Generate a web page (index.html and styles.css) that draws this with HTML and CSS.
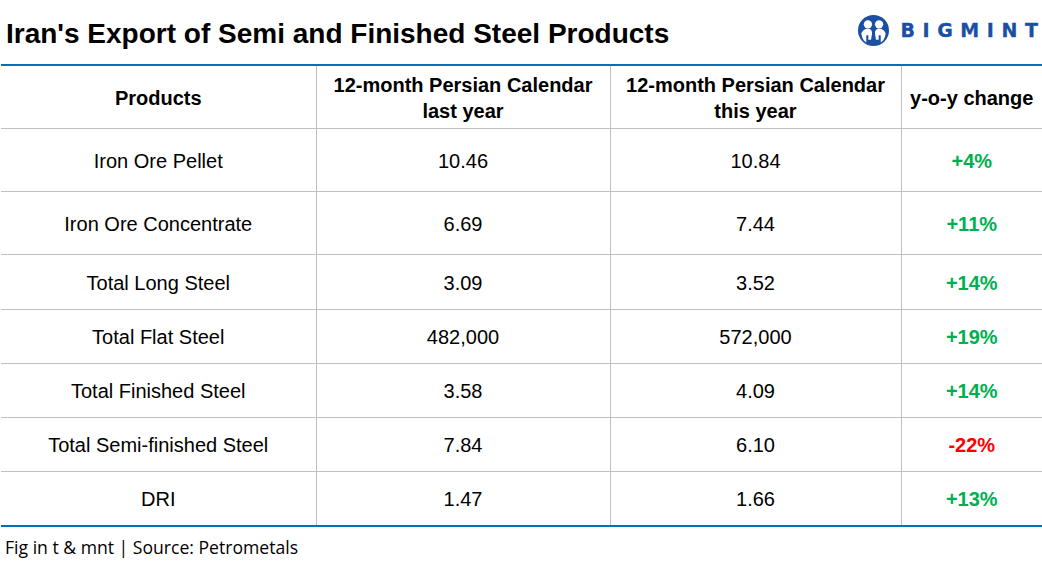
FILE: index.html
```html
<!DOCTYPE html>
<html>
<head>
<meta charset="utf-8">
<link rel="stylesheet" href="styles.css">
</head>
<body>
<div class="page">
  <header class="top">
    <h1 class="title">Iran's Export of Semi and Finished Steel Products</h1>
    <div class="logo">
      <svg class="logo-icon" width="31" height="31" viewBox="0 0 30 30" aria-hidden="true">
        <circle cx="15" cy="15" r="15" fill="#1a4fa3"/>
        <circle cx="9.6" cy="9" r="4" fill="#fff"/>
        <circle cx="20.4" cy="9" r="4" fill="#fff"/>
        <path d="M3.2 18 Q5 13.2 9.6 13.4 Q13.8 13.6 13.6 18 L12.6 24 L10 24 L10 19.5 L8 19.5 L8 26.5 L5.5 24.5 Q3.5 21.5 3.2 18 Z" fill="#fff"/>
        <path d="M26.8 18 Q25 13.2 20.4 13.4 Q16.2 13.6 16.4 18 L17.4 24 L20 24 L20 19.5 L22 19.5 L22 26.5 L24.5 24.5 Q26.5 21.5 26.8 18 Z" fill="#fff"/>
      </svg>
      <span class="logo-text">BIGMIN<span class="logo-last">T</span></span>
    </div>
  </header>
  <table class="data">
    <colgroup>
      <col class="c1"><col class="c2"><col class="c3"><col class="c4">
    </colgroup>
    <thead>
      <tr>
        <th>Products</th>
        <th>12-month Persian Calendar<br>last year</th>
        <th>12-month Persian Calendar<br>this year</th>
        <th>y-o-y change</th>
      </tr>
    </thead>
    <tbody>
      <tr class="tall"><td>Iron Ore Pellet</td><td>10.46</td><td>10.84</td><td class="up">+4%</td></tr>
      <tr class="tall"><td>Iron Ore Concentrate</td><td>6.69</td><td>7.44</td><td class="up">+11%</td></tr>
      <tr class="mid"><td>Total Long Steel</td><td>3.09</td><td>3.52</td><td class="up">+14%</td></tr>
      <tr><td>Total Flat Steel</td><td>482,000</td><td>572,000</td><td class="up">+19%</td></tr>
      <tr><td>Total Finished Steel</td><td>3.58</td><td>4.09</td><td class="up">+14%</td></tr>
      <tr><td>Total Semi-finished Steel</td><td>7.84</td><td>6.10</td><td class="down">-22%</td></tr>
      <tr class="last"><td>DRI</td><td>1.47</td><td>1.66</td><td class="up">+13%</td></tr>
    </tbody>
  </table>
  <p class="source">Fig in t &amp; mnt | Source: Petrometals</p>
</div>
</body>
</html>
```

FILE: styles.css
```css
html, body {
  margin: 0;
  padding: 0;
  background: #fff;
}

.page {
  width: 1042px;
  height: 564px;
  padding-left: 1px;
  box-sizing: border-box;
  font-family: "Liberation Sans", Arial, sans-serif;
  color: #000;
}

.top {
  display: flex;
  align-items: center;
  justify-content: space-between;
  height: 64px;
  padding-left: 5px;
  padding-right: 4px;
}

.title {
  margin: 0;
  font-size: 28px;
  font-weight: bold;
  padding-top: 3px;
}

.logo {
  display: flex;
  align-items: center;
  gap: 11px;
  margin-top: -4px;
}

.logo-icon {
  display: block;
}

.logo-text {
  font-family: "DejaVu Sans", "Liberation Sans", sans-serif;
  font-weight: bold;
  font-size: 19px;
  letter-spacing: 7.6px;
  color: #1a4fa3;
  line-height: 1;
  white-space: nowrap;
  -webkit-text-stroke: 0.3px #1a4fa3;
}

.logo-last {
  letter-spacing: 0;
}

.data {
  width: 1041px;
  border-collapse: collapse;
  table-layout: fixed;
  border-top: 2px solid #0070c0;
  border-bottom: 2px solid #0070c0;
}

.c1 { width: 315px; }
.c2 { width: 294px; }
.c3 { width: 291px; }
.c4 { width: 141px; }

.data th, .data td {
  text-align: center;
  vertical-align: middle;
  padding: 2px 0 0 0;
  border-left: 1px solid #bfbfbf;
  border-bottom: 1px solid #bfbfbf;
}

.data th:first-child, .data td:first-child {
  border-left: none;
}

.data th {
  height: 60px;
  font-size: 20px;
  font-weight: bold;
  line-height: 26px;
}

.data td {
  height: 60px;
  font-size: 20px;
}

.data tr.mid td { height: 52px; }
.data tbody tr:not(.tall):not(.mid) td { height: 51px; }
.data tr.last td { border-bottom: none; height: 50px; }

.data td.up {
  color: #00b050;
  font-weight: bold;
}

.data td.down {
  color: #ff0000;
  font-weight: bold;
}

.source {
  margin: 0;
  padding: 8px 0 0 4px;
  font-family: "Open Sans", "Liberation Sans", sans-serif;
  font-size: 17.6px;
  line-height: 24px;
  color: #000;
}
```
